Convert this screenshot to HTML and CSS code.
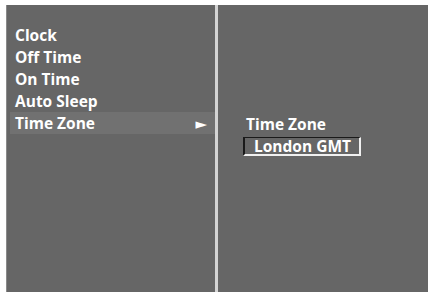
FILE: index.html
```html
<!DOCTYPE html>
<html>
<head>
<meta charset="utf-8">
<link rel="stylesheet" href="styles.css">
</head>
<body>
<div class="screen">
  <div class="menu">
    <div class="item">Clock</div>
    <div class="item">Off Time</div>
    <div class="item">On Time</div>
    <div class="item">Auto Sleep</div>
    <div class="item active"><span>Time Zone</span><span class="arrow">&#9658;</span></div>
  </div>
  <div class="divider"></div>
  <div class="detail">
    <div class="caption">Time Zone</div>
    <div class="value">London GMT</div>
  </div>
</div>
</body>
</html>
```
FILE: styles.css
```css
html, body {
  margin: 0;
  padding: 0;
  background: #ffffff;
  width: 428px;
  height: 292px;
  overflow: hidden;
}
.screen {
  margin: 5px 0 0 6px;
  height: 287px;
  display: flex;
  background: #666666;
  font-family: "Open Sans", "DejaVu Sans", sans-serif;
  font-weight: 700;
  color: #ffffff;
  font-size: 15.5px;
}
.menu {
  width: 209px;
  padding-top: 19px;
  display: flex;
  flex-direction: column;
  border-left: 1px solid #8a8a8a;
  box-sizing: border-box;
}
.item {
  height: 22px;
  line-height: 22px;
  padding-left: 8px;
  display: flex;
  justify-content: space-between;
}
.item.active {
  background: #717171;
  margin-left: 3px;
  padding-left: 5px;
  padding-right: 8px;
}
.arrow {
  font-size: 15px;
}
.divider {
  width: 3px;
  background: #d4d4d4;
}
.detail {
  flex: 1;
  padding: 108px 0 0 25px;
  display: flex;
  flex-direction: column;
  align-items: flex-start;
}
.caption {
  padding-left: 3px;
  line-height: 22px;
}
.value {
  margin-top: 2px;
  width: 118px;
  box-sizing: border-box;
  height: 19px;
  line-height: 16px;
  padding-left: 9px;
  border-top: 1px solid #1a1a1a;
  border-left: 2px solid #1a1a1a;
  border-bottom: 2px solid #f0f0f0;
  border-right: 2px solid #f0f0f0;
  font-size: 15.5px;
}
```
